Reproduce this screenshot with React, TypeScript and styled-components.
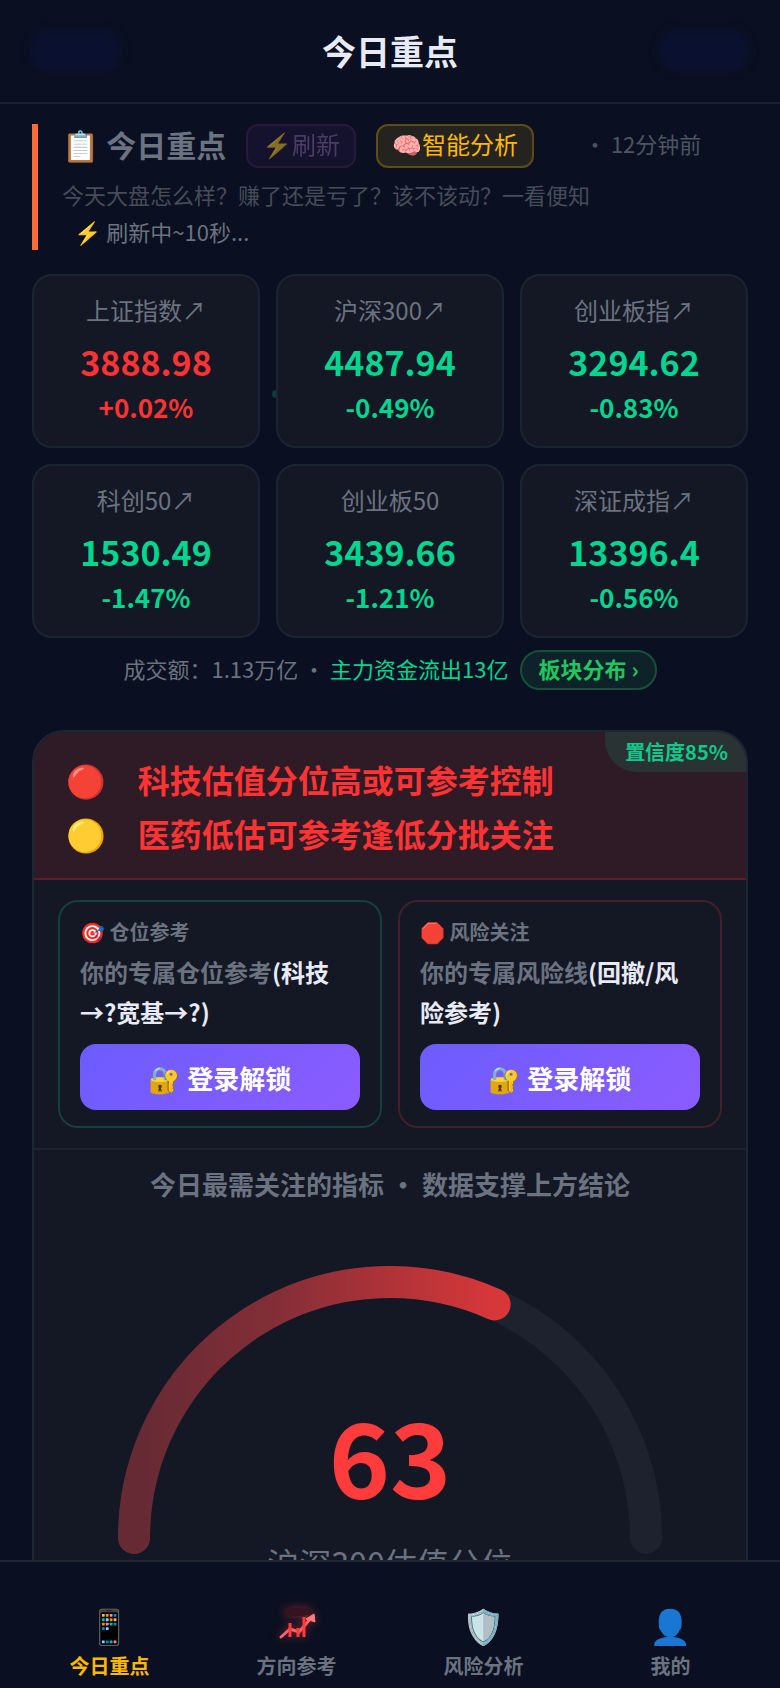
import React from 'react'
import styled, { createGlobalStyle } from 'styled-components'

const GlobalStyle = createGlobalStyle`
  * {
    box-sizing: border-box;
  }
  body {
    margin: 0;
    background: #0a1021;
    color: #e8eaf6;
    font-family: 'Noto Sans CJK SC', 'Noto Color Emoji', sans-serif;
  }
  h1, h2, h3, p {
    margin: 0;
  }
  button {
    font-family: inherit;
    cursor: pointer;
  }
`

const Page = styled.div`
  display: flex;
  flex-direction: column;
  height: 100vh;
`

const TopBar = styled.header`
  flex: none;
  display: grid;
  grid-template-columns: 88px 1fr 88px;
  align-items: center;
  padding: 31px 32px;
  border-bottom: 2px solid #1a2130;
`

const TopGlow = styled.span`
  height: 40px;
  border-radius: 16px;
  background: #0a1130;
  filter: blur(4px);
`

const TopTitle = styled.h1`
  font-size: 34px;
  line-height: 40px;
  text-align: center;
`

const Main = styled.main`
  flex: 1;
  min-height: 0;
  overflow-y: auto;
  scrollbar-width: none;
  padding: 20px 32px;
`

const Intro = styled.section`
  border-left: 6px solid #ff6b35;
  padding-left: 24px;
  margin-bottom: 24px;
`

const IntroRow = styled.div`
  display: flex;
  align-items: flex-start;
`

const IntroTitle = styled.h2`
  font-size: 30px;
  line-height: 40px;
  color: #6b7280;
  margin-right: 20px;
`

const PillButton = styled.button<{ $accent?: boolean }>`
  height: 44px;
  padding: 0 14px 4px;
  margin-right: 20px;
  border-radius: 12px;
  font-size: 24px;
  line-height: 36px;
  border: 2px solid ${({ $accent }) => ($accent ? '#604b14' : '#42254f')};
  background: ${({ $accent }) => ($accent ? '#25231f' : '#1f1437')};
  color: ${({ $accent }) => ($accent ? '#ffb800' : '#8a6aa8')};
  opacity: ${({ $accent }) => ($accent ? 1 : 0.5)};
`

const UpdatedAt = styled.span`
  margin-left: 30px;
  font-size: 22px;
  line-height: 38px;
  color: #4d5462;
`

const IntroText = styled.p`
  font-size: 22px;
  line-height: 36px;
  color: #464c5a;
  padding-top: 8px;
`

const IntroStatus = styled.p`
  font-size: 22px;
  line-height: 38px;
  color: #6b7280;
  padding-left: 12px;
`

const IndexGrid = styled.div`
  position: relative;
  display: grid;
  grid-template-columns: repeat(3, 1fr);
  gap: 16px;

  &::before {
    content: '';
    position: absolute;
    top: 116px;
    left: 33.5%;
    width: 8px;
    height: 8px;
    border-radius: 50%;
    background: #0b3b3c;
  }
`

const IndexCard = styled.article`
  position: relative;
  border: 2px solid #1d2431;
  border-radius: 20px;
  background: #141824;
  padding: 16px 8px 18px;
  text-align: center;
`

const IndexName = styled.h3`
  font-size: 24px;
  font-weight: 400;
  line-height: 36px;
  color: #6b7280;
`

const IndexValue = styled.p<{ $up?: boolean }>`
  font-size: 34px;
  font-weight: 700;
  line-height: 48px;
  padding-top: 10px;
  color: ${({ $up }) => ($up ? '#ff3333' : '#00d68f')};
`

const IndexChange = styled(IndexValue)`
  font-size: 26px;
  line-height: 42px;
  padding-top: 0;
`

const Turnover = styled.div`
  display: flex;
  align-items: center;
  justify-content: center;
  margin: 12px 0 40px;
  font-size: 22px;
  line-height: 32px;
  color: #6b7280;
  > span {
    padding-bottom: 4px;
  }
`

const FlowText = styled.span`
  color: #00d68f;
  margin-right: 12px;
`

const SectorButton = styled.button`
  height: 40px;
  padding: 0 16px 4px;
  border: 2px solid #17503a;
  border-radius: 20px;
  background: #0d2329;
  color: #22c55e;
  font-size: 22px;
  font-weight: 700;
  line-height: 32px;
`

const Report = styled.section`
  position: relative;
  border: 2px solid #1d2733;
  border-radius: 32px;
  background: #141824;
  overflow: hidden;
`

const Confidence = styled.span`
  position: absolute;
  top: 0;
  right: 0;
  padding: 0 18px 0 20px;
  border-bottom-left-radius: 32px;
  background: #2a3334;
  color: #10c98b;
  font-size: 20px;
  font-weight: 700;
  line-height: 40px;
`

const Verdict = styled.div`
  padding: 20px 32px 18px;
  border-bottom: 2px solid #55202a;
  background: #2f1b25;
  color: #ff3333;
  font-size: 32px;
  font-weight: 700;
  line-height: 54px;
`

const VerdictLine = styled.p`
  display: flex;
  gap: 32px;
`

const AdviceGrid = styled.div`
  display: grid;
  grid-template-columns: 1fr 1fr;
  gap: 16px;
  padding: 20px 24px;
  border-bottom: 2px solid #1d2431;
`

const AdviceCard = styled.article<{ $tone: string }>`
  border: 2px solid ${({ $tone }) => $tone};
  border-radius: 20px;
  padding: 14px 20px 16px;
`

const AdviceTitle = styled.h3`
  font-size: 20px;
  line-height: 32px;
  color: #6b7280;
`

const AdviceText = styled.p`
  font-size: 24px;
  font-weight: 700;
  line-height: 40px;
  padding: 4px 0 12px;
  color: #e8eaf6;
`

const Muted = styled.span`
  color: #6b7280;
`

const UnlockButton = styled.button`
  display: block;
  width: 100%;
  height: 66px;
  border: 0;
  border-radius: 16px;
  background: linear-gradient(135deg, #6c5cff, #8b5cff);
  color: #ffffff;
  font-size: 26px;
  font-weight: 700;
`

const ReportCaption = styled.h3`
  padding-top: 14px;
  font-size: 26px;
  line-height: 40px;
  text-align: center;
  color: #6b7280;
`

const GaugeBox = styled.figure`
  display: flex;
  flex-direction: column;
  align-items: center;
  margin: 0;
  padding: 62px 0 160px;
`

const GaugeStack = styled.div`
  display: grid;
  justify-items: center;
  > * {
    grid-area: 1 / 1;
  }
`

const GaugeNumber = styled.strong`
  align-self: end;
  color: #ff3b3b;
  font-size: 104px;
  line-height: 120px;
  margin-bottom: 40px;
`

const GaugeLabel = styled.figcaption`
  margin-top: -16px;
  font-size: 32px;
  line-height: 48px;
  color: #6b7280;
`

const TabBar = styled.nav`
  flex: none;
  display: flex;
  padding: 40px 16px 8px;
  border-top: 2px solid #1d2431;
`

const TabLink = styled.a<{ $active?: boolean }>`
  flex: 1;
  display: flex;
  flex-direction: column;
  align-items: center;
  gap: 4px;
  text-decoration: none;
  font-size: 20px;
  font-weight: 700;
  line-height: 28px;
  color: ${({ $active }) => ($active ? '#ffb800' : '#6b7280')};
`

const TabIcon = styled.span`
  display: flex;
  align-items: center;
  height: 46px;
  font-size: 34px;
  font-weight: 400;
`

const TrendSvg = styled.svg`
  filter: drop-shadow(0 0 4px rgba(255, 59, 59, 0.5));
`

const indices = [
  { name: '上证指数↗', value: '3888.98', change: '+0.02%', up: true },
  { name: '沪深300↗', value: '4487.94', change: '-0.49%' },
  { name: '创业板指↗', value: '3294.62', change: '-0.83%' },
  { name: '科创50↗', value: '1530.49', change: '-1.47%' },
  { name: '创业板50', value: '3439.66', change: '-1.21%' },
  { name: '深证成指↗', value: '13396.4', change: '-0.56%' },
]

const percentile = 63.4

const Gauge: React.FC<{ value: number }> = ({ value }) => {
  const angle = Math.PI * (1 - value / 100)
  const x = 272 + 256 * Math.cos(angle)
  const y = 272 - 256 * Math.sin(angle)
  return (
    <svg width="544" height="288" viewBox="0 0 544 288" fill="none" aria-hidden="true">
      <defs>
        <linearGradient id="gauge" x1="0" x2="1" y1="0" y2="0">
          <stop offset="0" stopColor="#652a34" />
          <stop offset="0.4" stopColor="#842e37" />
          <stop offset="1" stopColor="#d83739" />
        </linearGradient>
      </defs>
      <path d="M16 272A256 256 0 0 1 528 272" stroke="#1d222e" strokeWidth="32" strokeLinecap="round" />
      <path d={`M16 272A256 256 0 0 1 ${x} ${y}`} stroke="url(#gauge)" strokeWidth="32" strokeLinecap="round" />
    </svg>
  )
}

const TrendIcon = () => (
  <TrendSvg width="40" height="44" viewBox="0 0 40 44" fill="none" aria-hidden="true">
    <ellipse cx="21" cy="9" rx="14" ry="4" fill="#35131f" />
    <path d="M4 34L13 26L22 29L34 15" stroke="#ff5f66" strokeWidth="3" strokeLinecap="round" />
    <path d="M13 34V20M21 34V25M27 34V14" stroke="#ff3b3b" strokeWidth="3" />
    <path d="M29 16L37 11L38 19Z" fill="#ff7b82" stroke="#ff7b82" />
  </TrendSvg>
)

const App: React.FC = () => (
  <>
    <GlobalStyle />
    <Page>
      <TopBar>
        <TopGlow />
        <TopTitle>今日重点</TopTitle>
        <TopGlow />
      </TopBar>

      <Main>
        <Intro>
          <IntroRow>
            <IntroTitle>📋 今日重点</IntroTitle>
            <PillButton>⚡刷新</PillButton>
            <PillButton $accent>🧠智能分析</PillButton>
            <UpdatedAt>· 12分钟前</UpdatedAt>
          </IntroRow>
          <IntroText>今天大盘怎么样？赚了还是亏了？该不该动？一看便知</IntroText>
          <IntroStatus>⚡ 刷新中~10秒...</IntroStatus>
        </Intro>

        <IndexGrid>
          {indices.map(({ name, value, change, up }) => (
            <IndexCard key={name}>
              <IndexName>{name}</IndexName>
              <IndexValue $up={up}>{value}</IndexValue>
              <IndexChange $up={up}>{change}</IndexChange>
            </IndexCard>
          ))}
        </IndexGrid>

        <Turnover>
          <span>成交额：1.13万亿&nbsp;·&nbsp;</span>
          <FlowText>主力资金流出13亿</FlowText>
          <SectorButton>板块分布 ›</SectorButton>
        </Turnover>

        <Report>
          <Verdict>
            <VerdictLine>
              <span>🔴</span>科技估值分位高或可参考控制
            </VerdictLine>
            <VerdictLine>
              <span>🟡</span>医药低估可参考逢低分批关注
            </VerdictLine>
          </Verdict>
          <Confidence>置信度85%</Confidence>

          <AdviceGrid>
            <AdviceCard $tone="#14403f">
              <AdviceTitle>🎯 仓位参考</AdviceTitle>
              <AdviceText>
                <Muted>你的专属仓位参考</Muted>(科技→?宽基→?)
              </AdviceText>
              <UnlockButton>🔐 登录解锁</UnlockButton>
            </AdviceCard>
            <AdviceCard $tone="#431f2a">
              <AdviceTitle>🛑 风险关注</AdviceTitle>
              <AdviceText>
                <Muted>你的专属风险线</Muted>(回撤/风险参考)
              </AdviceText>
              <UnlockButton>🔐 登录解锁</UnlockButton>
            </AdviceCard>
          </AdviceGrid>

          <ReportCaption>今日最需关注的指标 · 数据支撑上方结论</ReportCaption>
          <GaugeBox>
            <GaugeStack>
              <Gauge value={percentile} />
              <GaugeNumber>{Math.round(percentile)}</GaugeNumber>
            </GaugeStack>
            <GaugeLabel>沪深300估值分位</GaugeLabel>
          </GaugeBox>
        </Report>
      </Main>

      <TabBar>
        <TabLink href="#today" $active>
          <TabIcon>📱</TabIcon>
          今日重点
        </TabLink>
        <TabLink href="#direction">
          <TabIcon>
            <TrendIcon />
          </TabIcon>
          方向参考
        </TabLink>
        <TabLink href="#risk">
          <TabIcon>🛡️</TabIcon>
          风险分析
        </TabLink>
        <TabLink href="#me">
          <TabIcon>👤</TabIcon>
          我的
        </TabLink>
      </TabBar>
    </Page>
  </>
)

export default App
